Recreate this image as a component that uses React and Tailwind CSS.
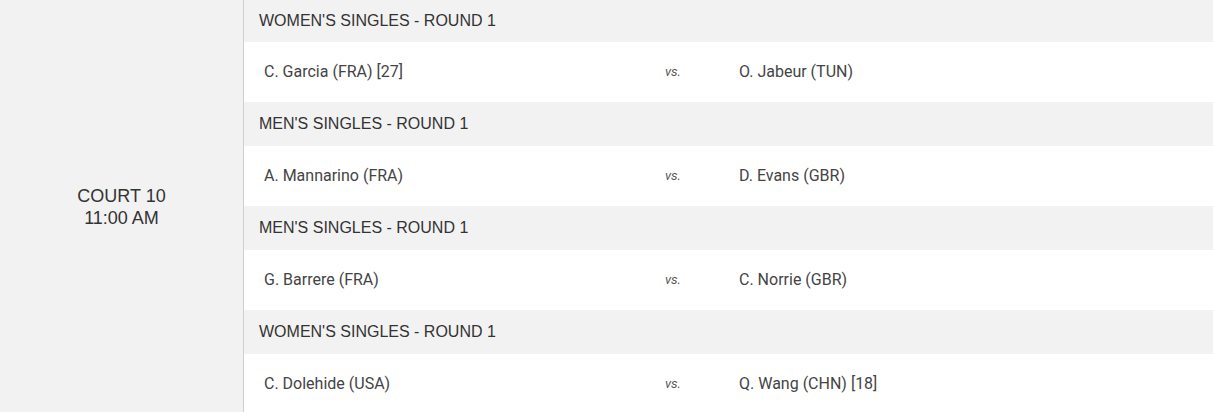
const matches = [
  { round: "WOMEN'S SINGLES - ROUND 1", p1: 'C. Garcia (FRA) [27]', p2: 'O. Jabeur (TUN)' },
  { round: "MEN'S SINGLES - ROUND 1", p1: 'A. Mannarino (FRA)', p2: 'D. Evans (GBR)' },
  { round: "MEN'S SINGLES - ROUND 1", p1: 'G. Barrere (FRA)', p2: 'C. Norrie (GBR)' },
  { round: "WOMEN'S SINGLES - ROUND 1", p1: 'C. Dolehide (USA)', p2: 'Q. Wang (CHN) [18]' },
];

export default function App() {
  return (
    <div className="flex w-[1213px] h-[412px] overflow-hidden bg-white">
      {/* court + time */}
      <div className="w-[244px] shrink-0 flex items-center justify-center bg-[#f2f2f2] border-r border-[#cfcfcf] font-['Liberation_Sans',Arial,sans-serif] text-[18px] leading-[22px] text-[#333] text-center pt-[2px]">
        <div>
          COURT 10
          <br />
          11:00 AM
        </div>
      </div>

      <div className="flex-1 flex flex-col">
        {matches.map((m, i) => (
          <div key={i}>
            <div
              className={`${i === 0 ? 'h-[42px]' : 'h-[44px]'} flex items-center pl-[15px] bg-[#f2f2f2] font-['Liberation_Sans',Arial,sans-serif] text-[16px] text-[#333]`}
            >
              {m.round}
            </div>
            <div className="h-[60px] flex items-center bg-white font-['Roboto',sans-serif] text-[16px] text-[#444]">
              <div className="w-[421px] pl-[20px]">{m.p1}</div>
              <div className="w-[74px] text-[13px] italic text-[#555]">vs.</div>
              <div>{m.p2}</div>
            </div>
          </div>
        ))}
      </div>
    </div>
  );
}
